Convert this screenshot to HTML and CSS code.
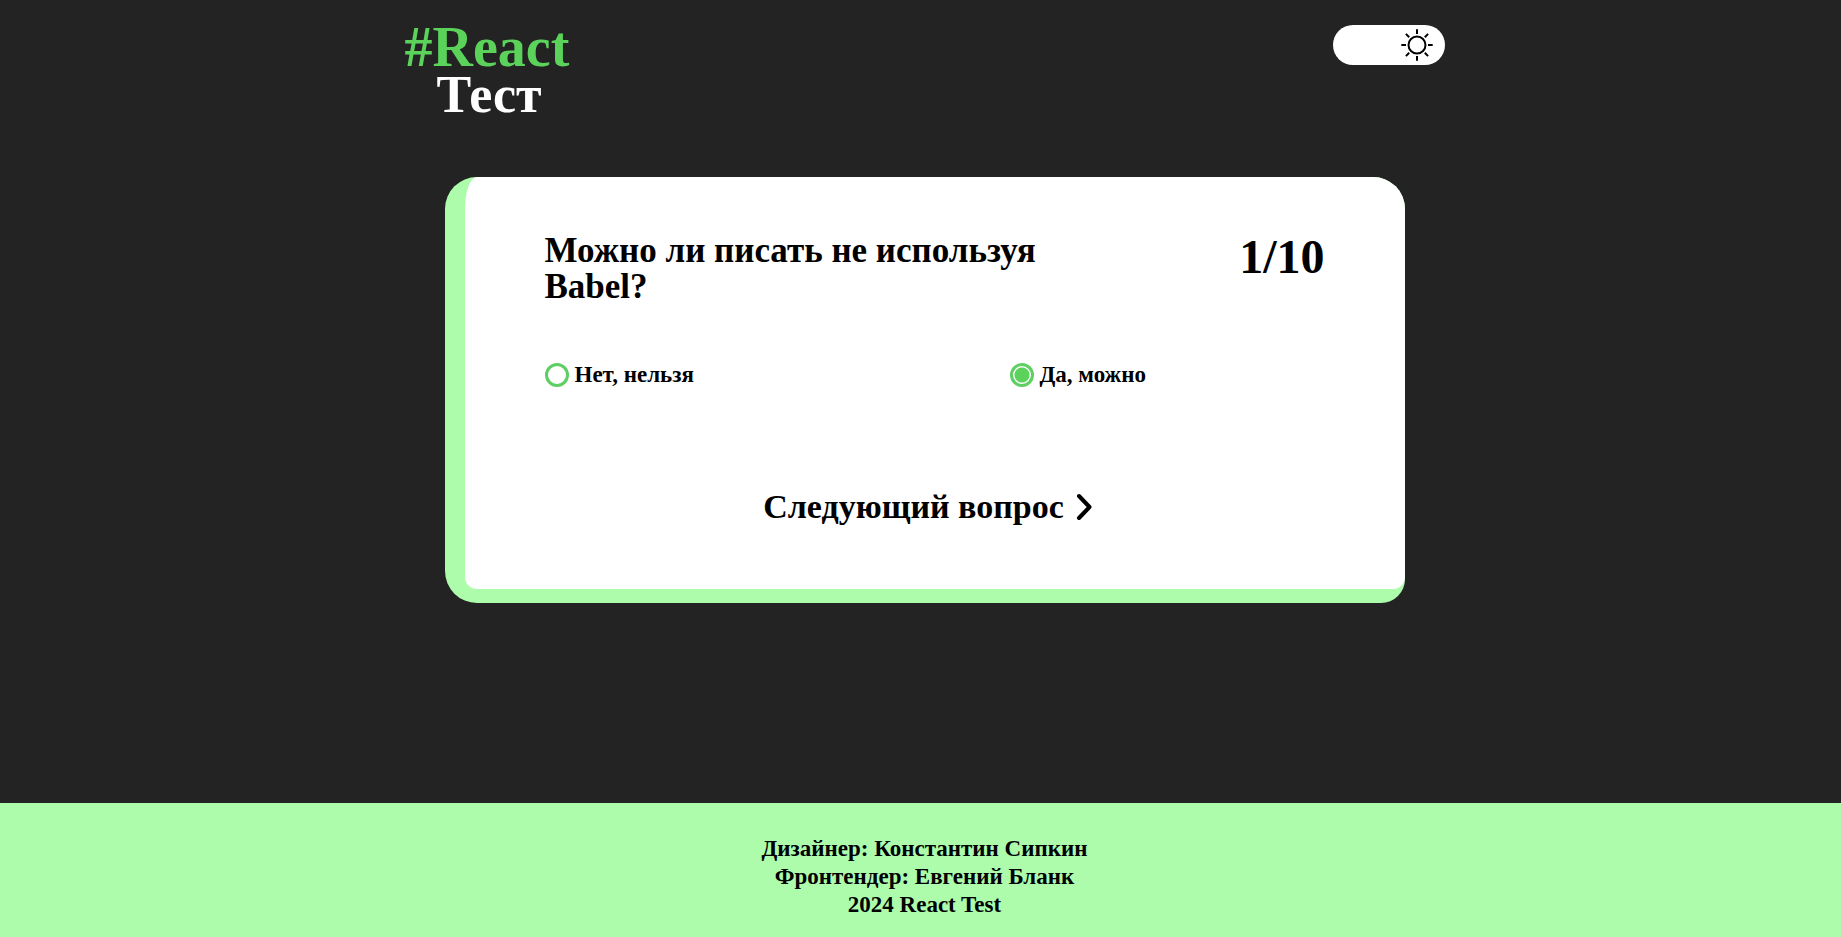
FILE: index.html
```
<!DOCTYPE html>
<html lang="ru">
<head>
<meta charset="utf-8">
<meta name="viewport" content="width=device-width, initial-scale=1">
<title>React Тест</title>
<link rel="stylesheet" href="styles.css">
</head>
<body>
<header class="header">
  <h1 class="logo"><span class="logo-top">#React</span><span class="logo-bottom">Тест</span></h1>
  <button class="theme-toggle" type="button" aria-label="Сменить тему">
    <svg width="32" height="32" viewBox="0 0 32 32" fill="none" stroke="#000" stroke-width="2" aria-hidden="true">
      <circle cx="16" cy="16" r="8.5"/>
      <path d="M16 0.3v4.7M16 27v4.7M0.3 16H5M27 16h4.7M4.9 4.9l3.3 3.3M23.8 23.8l3.3 3.3M4.9 27.1l3.3-3.3M23.8 8.2l3.3-3.3"/>
    </svg>
  </button>
</header>
<main class="main">
  <div class="card">
    <form class="card-body">
      <div class="card-head">
        <h2 class="question" id="question">Можно ли писать не используя Babel?</h2>
        <p class="counter">1/10</p>
      </div>
      <div class="answers" role="radiogroup" aria-labelledby="question">
        <label class="answer"><input class="radio" type="radio" name="answer" value="no">Нет, нельзя</label>
        <label class="answer"><input class="radio" type="radio" name="answer" value="yes" checked>Да, можно</label>
      </div>
      <button class="next" type="button">
        Следующий вопрос
        <svg class="next-icon" width="16" height="28" viewBox="0 0 16 28" fill="none" stroke="#000" stroke-width="4" stroke-linecap="round" stroke-linejoin="round" aria-hidden="true"><path d="M3 3l10.500 11L3 25"/></svg>
      </button>
    </form>
  </div>
</main>
<footer class="footer">
  <p class="credit">Дизайнер: Константин Сипкин</p>
  <p class="credit">Фронтендер: Евгений Бланк</p>
  <p class="credit">2024 React Test</p>
</footer>
</body>
</html>
```
FILE: styles.css
```
* {
  box-sizing: border-box;
  margin: 0;
}

body {
  display: flex;
  flex-direction: column;
  min-height: 100vh;
  background: #232323;
  color: #000;
  font-family: "Liberation Serif", "Times New Roman", serif;
  font-weight: 700;
}

button {
  border: 0;
  padding: 0;
  background: none;
  color: inherit;
  font: inherit;
  cursor: pointer;
}

.header,
.main,
.footer {
  padding-left: 8px;
}

.header {
  display: flex;
  justify-content: space-between;
  align-items: flex-start;
  width: 100%;
  max-width: 1048px;
  margin: 0 auto;
  padding-top: 25px;
}

.logo {
  display: flex;
  flex-direction: column;
  font-size: 56px;
  line-height: 44px;
}

.logo-top {
  color: #5bd35b;
}

.logo-bottom {
  padding-left: 32px;
  color: #fff;
  font-size: 52px;
  line-height: 52px;
}

.theme-toggle {
  display: flex;
  justify-content: flex-end;
  align-items: center;
  width: 112px;
  height: 40px;
  padding-right: 12px;
  border-radius: 20px;
  background: #fff;
}

.main {
  flex: 1;
  padding-top: 56px;
  padding-bottom: 40px;
}

.card {
  width: 100%;
  max-width: 960px;
  margin: 0 auto;
  padding: 0 0 14px 20px;
  border-radius: 32px 32px 24px 32px;
  background: #acfcac;
}

.card-body {
  display: flex;
  flex-direction: column;
  padding: 56px 80px 64px;
  border-radius: 12px 32px 12px 12px / 32px 32px 12px 12px;
  background: #fff;
}

.card-head {
  display: flex;
  justify-content: space-between;
  align-items: flex-start;
}

.question {
  max-width: 560px;
  font-size: 35px;
  line-height: 36px;
}

.counter {
  font-size: 48px;
  line-height: 48px;
}

.answers {
  display: grid;
  grid-template-columns: 1fr 1fr;
  gap: 150px;
  padding: 56px 0 100px;
}

.answer {
  display: flex;
  align-items: center;
  gap: 6px;
  font-size: 23px;
  line-height: 28px;
}

.radio {
  appearance: none;
  flex: none;
  width: 24px;
  height: 24px;
  margin: 0;
  border: 3px solid #5fcf63;
  border-radius: 50%;
}

.radio:checked {
  background: radial-gradient(circle, #5bd35b 7px, #fff 8px);
}

.next {
  display: flex;
  align-items: center;
  align-self: center;
  gap: 12px;
  margin-right: 14px;
  font-size: 34px;
  line-height: 36px;
}

.next-icon {
  flex: none;
}

.footer {
  padding-top: 32px;
  padding-bottom: 18px;
  background: #acfcac;
  text-align: center;
}

.credit {
  font-size: 23px;
  line-height: 28px;
}
```
